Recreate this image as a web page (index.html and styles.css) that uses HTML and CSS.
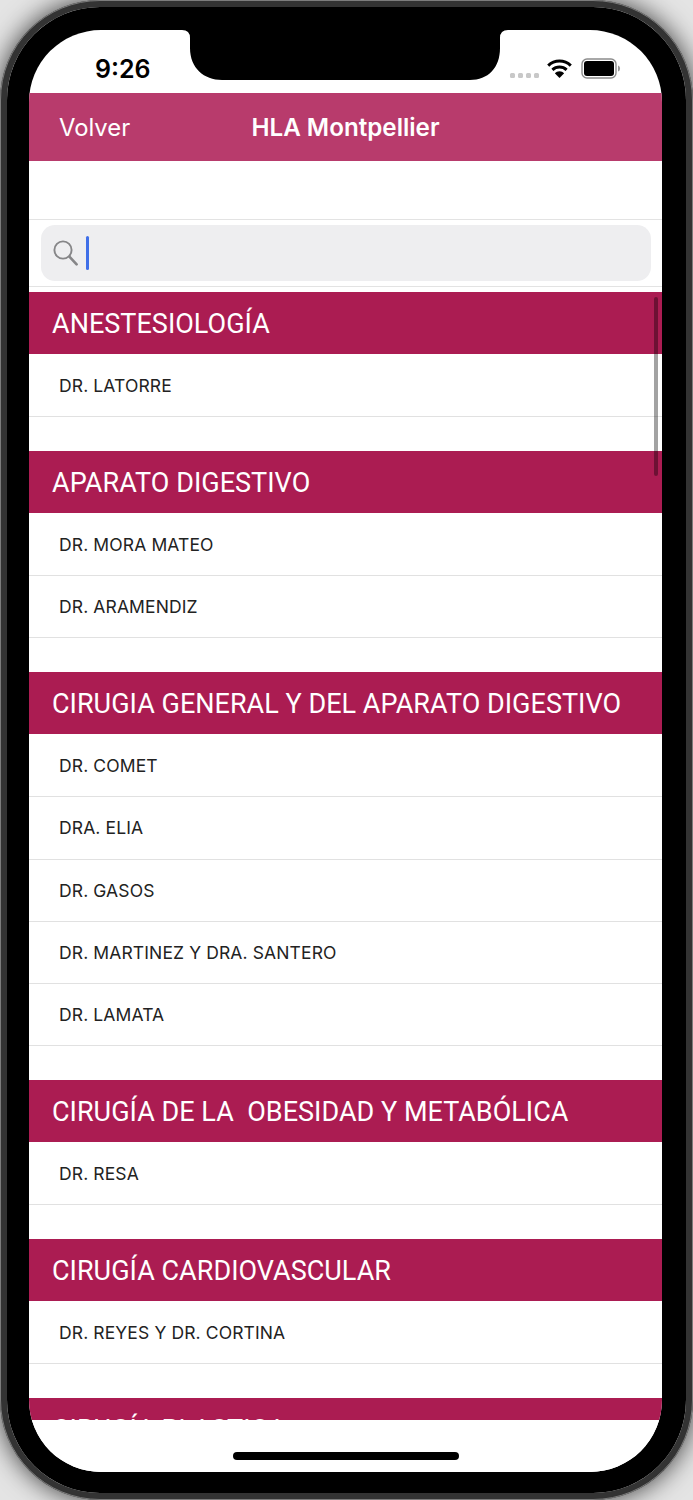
FILE: index.html
```html
<!DOCTYPE html>
<html lang="es">
<head>
<meta charset="utf-8">
<title>HLA Montpellier</title>
<link rel="stylesheet" href="styles.css">
</head>
<body>
<div class="phone">
  <div class="screen">
    <svg class="notch" width="326" height="50" viewBox="0 0 326 50"><path d="M0 0 Q8 0 8 8 V18 C8 38 22 50 40 50 H288 C306 50 318 38 318 18 V8 Q318 0 326 0 Z" fill="#000"/></svg>
    <header class="status">
      <span class="time">9:26</span>
      <div class="status-icons">
        <div class="dots"><i></i><i></i><i></i><i></i></div>
        <svg class="wifi" width="25" height="19" viewBox="0 0 25 19"><path d="M1.2 6.6 A16.5 16.5 0 0 1 23.8 6.6" fill="none" stroke="#000" stroke-width="3"/><path d="M5.4 10.8 A10.4 10.4 0 0 1 19.6 10.8" fill="none" stroke="#000" stroke-width="3"/><path d="M12.5 19 L7.8 14.2 A6.6 6.6 0 0 1 17.2 14.2 Z" fill="#000"/></svg>
        <svg class="battery" width="40" height="21" viewBox="0 0 40 21"><rect x="1" y="1" width="34" height="19" rx="5" fill="none" stroke="#8c8c8c" stroke-width="1.4"/><rect x="3" y="3" width="30" height="15" rx="3" fill="#000"/><path d="M37 7.5 C38.5 8 39 9 39 10.5 C39 12 38.5 13 37 13.5 Z" fill="#999"/></svg>
      </div>
    </header>
    <nav class="nav">
      <span class="back">Volver</span>
      <span class="title">HLA Montpellier</span>
    </nav>
    <div class="spacer"></div>
    <div class="search">
      <div class="field">
        <svg class="glass" width="25" height="26" viewBox="0 0 25 26"><circle cx="10" cy="10" r="8.6" fill="none" stroke="#868688" stroke-width="1.9"/><path d="M16.4 16.6 L23.6 24.4" stroke="#868688" stroke-width="2.6" stroke-linecap="round"/></svg>
        <span class="caret"></span>
      </div>
    </div>
    <main class="list">
      <section class="group">
        <h2 class="head">ANESTESIOLOGÍA</h2>
        <div class="row">DR. LATORRE</div>
      </section>
      <section class="group">
        <h2 class="head">APARATO DIGESTIVO</h2>
        <div class="row">DR. MORA MATEO</div>
        <div class="row">DR. ARAMENDIZ</div>
      </section>
      <section class="group">
        <h2 class="head">CIRUGIA GENERAL Y DEL APARATO DIGESTIVO</h2>
        <div class="row">DR. COMET</div>
        <div class="row">DRA. ELIA</div>
        <div class="row">DR. GASOS</div>
        <div class="row">DR. MARTINEZ Y DRA. SANTERO</div>
        <div class="row">DR. LAMATA</div>
      </section>
      <section class="group">
        <h2 class="head">CIRUGÍA DE LA&nbsp; OBESIDAD Y METABÓLICA</h2>
        <div class="row">DR. RESA</div>
      </section>
      <section class="group">
        <h2 class="head">CIRUGÍA CARDIOVASCULAR</h2>
        <div class="row">DR. REYES Y DR. CORTINA</div>
      </section>
      <section class="group">
        <h2 class="head">CIRUGÍA PLASTICA</h2>
      </section>
    </main>
    <div class="scrollbar"></div>
    <footer class="foot"><span class="home"></span></footer>
  </div>
</div>
</body>
</html>
```

FILE: styles.css
```css
* { box-sizing: border-box; }
html, body { margin: 0; padding: 0; }
body {
  width: 693px;
  height: 1500px;
  overflow: hidden;
  background: #e4e4e4;
  font-family: "Inter", "Liberation Sans", sans-serif;
}
.phone {
  width: 693px;
  height: 1500px;
  padding: 23px 24px 21px 22px;
  background: #000;
  background-clip: padding-box;
  border: 7px solid #333;
  border-radius: 100px;
  outline: 1px solid #7c7c7c;
  outline-offset: -1px;
  box-shadow: 0 0 26px rgba(0, 0, 0, 0.75);
}
.screen {
  position: relative;
  width: 633px;
  height: 1442px;
  background: #fff;
  border-radius: 72px;
  overflow: hidden;
  display: flex;
  flex-direction: column;
}
.notch { position: absolute; left: 153px; top: 0; }
.status {
  height: 63px;
  flex: none;
  display: flex;
  justify-content: space-between;
  padding: 24px 41px 0 66px;
}
.time { font-size: 25px; line-height: 30px; font-weight: 600; color: #000; }
.status-icons { display: flex; align-items: flex-start; margin-top: -1px; }
.dots { display: flex; gap: 3px; margin-top: 20px; margin-right: 8px; }
.dots i { width: 5px; height: 5px; border-radius: 1.5px; background: #c8c8c8; display: block; }
.wifi { margin-top: 6px; margin-right: 9px; }
.battery { margin-top: 5px; }
.nav {
  position: relative;
  flex: none;
  height: 68px;
  background: #b83b6c;
  color: #fff;
  display: flex;
  align-items: center;
  justify-content: center;
}
.back { position: absolute; left: 30px; top: 50%; transform: translateY(-50%); font-size: 23.8px; font-weight: 400; }
.title { font-size: 24.2px; font-weight: 600; }
.spacer { height: 58px; flex: none; }
.search {
  flex: none;
  padding: 5px 11px 5px 12px;
  border-top: 1px solid #e3e3e3;
  border-bottom: 1px solid #e3e3e3;
  margin-bottom: 5px;
  height: 68px;
}
.field {
  height: 56px;
  background: #eeeef0;
  border-radius: 14px;
  display: flex;
  align-items: center;
  padding-left: 12px;
}
.caret { width: 3px; height: 34px; background: #3f6fe8; border-radius: 2px; margin-left: 8px; }
.glass { flex: none; }
.list { flex: 1; overflow: hidden; min-height: 0; }
.group { margin-bottom: 34.8px; }
.head {
  margin: 0;
  height: 62px;
  padding-left: 23px;
  background: #ab1c52;
  color: #fff;
  font-family: "Roboto", "Liberation Sans", sans-serif;
  font-size: 27px;
  font-weight: 400;
  letter-spacing: 0.02px;
  line-height: 64px;
  white-space: nowrap;
  overflow: hidden;
}
.row {
  height: 63.2px;
  margin-bottom: -1px;
  padding-top: 1px;
  padding-left: 30px;
  border-bottom: 1px solid #e1e1e1;
  font-size: 17.5px;
  letter-spacing: 0.12px;
  line-height: 62px;
  color: #222;
  overflow: hidden;
}
.scrollbar {
  position: absolute;
  left: 625px;
  top: 267px;
  width: 4px;
  height: 179px;
  border-radius: 2px;
  background: rgba(0, 0, 0, 0.36);
}
.foot { flex: none; height: 52px; background: #fff; position: relative; }
.home {
  position: absolute;
  left: 204px;
  top: 32px;
  width: 226px;
  height: 8px;
  border-radius: 4px;
  background: #000;
}
```
